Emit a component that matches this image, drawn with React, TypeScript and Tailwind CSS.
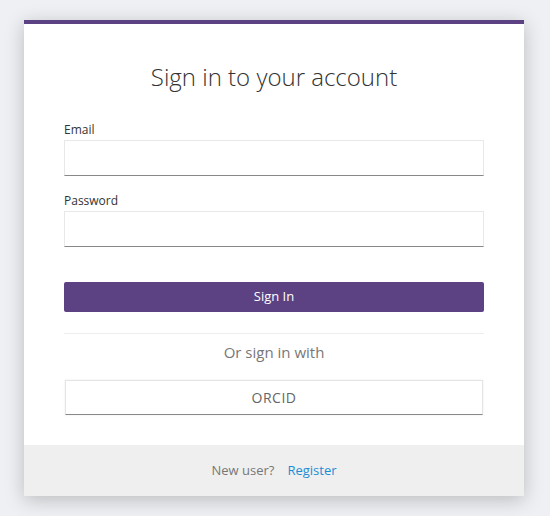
export default function App() {
  return (
    <div
      className="min-h-[516px] bg-[#eff0f3] pt-[20px]"
      style={{ fontFamily: '"Open Sans", "Liberation Sans", sans-serif' }}
    >
      <div className="ml-6 w-[500px] border-t-4 border-[#5c4283] bg-white shadow-[0_4px_18px_rgba(0,0,0,0.22)]">
        {/* Body */}
        <div className="px-10 pt-[37px] pb-[30px]">
          <h1 className="text-center text-[24px] leading-[32px] font-light text-[#333]">
            Sign in to your account
          </h1>

          <label className="mt-[28px] block text-[12px] leading-[18px] text-[#333]">
            Email
          </label>
          <input
            type="email"
            className="mt-[1px] block h-[36px] w-full border border-[#e8e8e8] border-b-[#888] bg-white outline-none"
          />

          <label className="mt-[16px] block text-[12px] leading-[18px] text-[#333]">
            Password
          </label>
          <input
            type="password"
            className="mt-[1px] block h-[36px] w-full border border-[#e8e8e8] border-b-[#888] bg-white outline-none"
          />

          <button
            type="button"
            className="mt-[35px] block h-[30px] w-full rounded-[2px] bg-[#5c4283] text-[13px] text-white"
          >
            Sign In
          </button>

          <div className="mt-[21px] border-t border-[#eeeeee]" />

          <p className="mt-[8px] text-center text-[15px] leading-[20px] text-[#777]">
            Or sign in with
          </p>

          <button
            type="button"
            className="mx-px mt-[18px] block h-[35px] w-[418px] border border-[#e4e4e4] border-b-[#888] bg-white text-[14px] tracking-[0.5px] text-[#666] shadow-[0_0_2px_rgba(0,0,0,0.08)]"
          >
            ORCID
          </button>
        </div>

        {/* Footer */}
        <div className="flex h-[51px] items-center justify-center gap-[13px] bg-[#efefef] text-[13px]">
          <span className="text-[#777]">New user?</span>
          <a className="text-[#1b8dd6]" href="#">
            Register
          </a>
        </div>
      </div>
    </div>
  );
}
